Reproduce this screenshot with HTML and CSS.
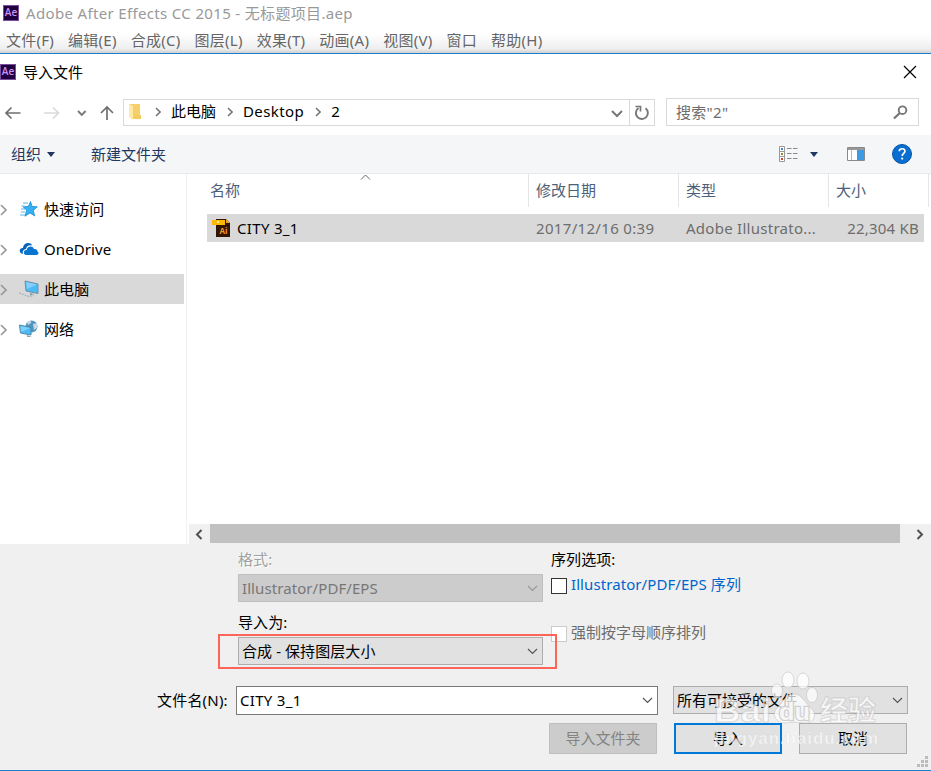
FILE: index.html
```
<!DOCTYPE html>
<html lang="zh-CN">
<head>
<meta charset="utf-8">
<title>导入文件</title>
<link rel="stylesheet" href="styles.css">
</head>
<body>
<div class="app">
  <header class="app-title"><span class="ae">Ae</span><span class="t-title">Adobe After Effects CC 2015 - 无标题项目.aep</span></header>
  <nav class="menu">
    <span>文件(F)</span><span>编辑(E)</span><span>合成(C)</span><span>图层(L)</span><span>效果(T)</span><span>动画(A)</span><span>视图(V)</span><span>窗口</span><span>帮助(H)</span>
  </nav>
  <section class="dialog">
    <div class="dlg-title"><span class="ae">Ae</span><span class="dlg-name">导入文件</span>
      <svg class="close" width="14" height="14" viewBox="0 0 14 14"><path d="M1 1l12 12M13 1L1 13" stroke="#000" stroke-width="1.2" fill="none"/></svg>
    </div>
    <div class="nav">
      <svg class="arrows" width="123" height="26" viewBox="0 0 123 26" fill="none" stroke-width="1.7">
        <path d="M6 14h14.500M11.500 8.500L6 14l5.500 5.500" stroke="#6f6f6f"/>
        <path d="M44 14h14.500M53 8.500l5.500 5.500-5.500 5.500" stroke="#dadada"/>
        <path d="M78 12l3.800 3.800 3.800-3.800" stroke="#777" stroke-width="1.900"/>
        <path d="M107 21V8M101 14l6-6 6 6" stroke="#6f6f6f"/>
      </svg>
      <div class="address">
        <svg class="folder" width="14" height="18" viewBox="0 0 14 18"><path d="M1 1h11v13H1z" fill="#f5cf68"/><path d="M1 1l4 2v14l-4-3z" fill="#ffe9a6"/><path d="M10 12h3v4h-8l0-2z" fill="#f3cb60"/></svg>
        <svg class="sep s1" width="6" height="10" viewBox="0 0 6 10"><path d="M1 1l4 4-4 4"/></svg>
        <span class="crumb c1">此电脑</span>
        <svg class="sep s2" width="6" height="10" viewBox="0 0 6 10"><path d="M1 1l4 4-4 4"/></svg>
        <span class="crumb c2">Desktop</span>
        <svg class="sep s3" width="6" height="10" viewBox="0 0 6 10"><path d="M1 1l4 4-4 4"/></svg>
        <span class="crumb">2</span>
        <svg class="drop" width="12" height="8" viewBox="0 0 12 8"><path d="M1 1l5 5 5-5" fill="none" stroke="#777" stroke-width="2"/></svg>
        <span class="refresh"><svg width="16" height="16" viewBox="0 0 16 16"><path d="M11.500 3.200A6 6 0 1 1 4.500 3" fill="none" stroke="#777" stroke-width="1.900"/><path d="M1.500 1.500h5v5" fill="none" stroke="#777" stroke-width="1.700"/></svg></span>
      </div>
      <div class="search"><span>搜索"2"</span><svg width="15" height="15" viewBox="0 0 15 15" fill="none" stroke="#777"><circle cx="9.500" cy="5.200" r="3.800" stroke-width="1.900"/><path d="M6.800 8L1 13.500" stroke-width="2.400"/></svg></div>
    </div>
    <div class="toolbar">
      <span class="organize">组织</span><i class="tri"></i><span class="newfolder">新建文件夹</span>
      <svg class="view" width="19" height="16" viewBox="0 0 19 16"><path d="M.5 .5h5v15h-5zM.5 5.500h5M.5 10.500h5" fill="#fff" stroke="#999"/><path d="M2 2h2v2H2z" fill="#4286c5"/><path d="M2 7h2v2H2z" fill="#8f8a30"/><path d="M2 12h2v2H2z" fill="#d34a20"/><path d="M8 2.500h4.500M14 2.500h4.500M8 7.500h4.500M14 7.500h4.500M8 12.500h4.500M14 12.500h4.500" stroke="#8a8a8a"/></svg>
      <i class="tri tri-view"></i>
      <svg class="pane" width="18" height="14" viewBox="0 0 18 14"><path d="M.5 .5h17v13H.5z" fill="#fff" stroke="#8a8a8a"/><path d="M1 1h16v2H1z" fill="#999"/><path d="M4.500 3v10" stroke="#bbb"/><path d="M10 3h7v10h-7z" fill="#3d9be6"/></svg>
      <svg class="help" width="20" height="20" viewBox="0 0 20 20"><circle cx="10" cy="10" r="9.500" fill="#0a6ed0" stroke="#0556a8"/><path d="M7.200 7.200c.3-3.400 6-3.200 5.700.1-.2 2-2.700 2.200-2.700 4.700" fill="none" stroke="#fff" stroke-width="1.700"/><circle cx="10.200" cy="14.600" r="1.100" fill="#fff"/></svg>
    </div>
    <div class="body">
      <aside class="side">
        <div class="item"><svg class="chev" width="8" height="12" viewBox="0 0 8 12"><path d="M1 1l5 5-5 5"/></svg>
          <svg class="ico" width="20" height="18" viewBox="0 0 20 18"><path d="M11.500 1.500l1.600 5 5.200.3-4 3.600 1.300 5.500-4.600-3-5 3.300 1.700-6L4.200 7l5.300-.8z" fill="#35b0f2" stroke="#168bd2" stroke-width=".8"/><path d="M4 3h5M2.500 6h3M2 9h4M2 12h4M1 15h5" stroke="#54b4ea"/></svg><span>快速访问</span></div>
        <div class="item"><svg class="chev" width="8" height="12" viewBox="0 0 8 12"><path d="M1 1l5 5-5 5"/></svg>
          <svg class="ico" width="20" height="18" viewBox="0 0 20 18"><path d="M4 14C-.5 13-.3 8 4 8c.2-5 7-7 9.500-2.500-4-1-6 1-6.500 3.500-3 .5-3.800 3-3 5z" fill="#0864bd"/><path d="M7 15c-3-.5-3-5 .6-5 .4-4 6-5 7.400-1 3-.2 3.500 2 3.500 2.500 1.800 1 1 3.500-1 3.500z" fill="#0875d1"/></svg><span>OneDrive</span></div>
        <div class="item selected"><svg class="chev" width="8" height="12" viewBox="0 0 8 12"><path d="M1 1l5 5-5 5"/></svg>
          <svg class="ico" width="20" height="18" viewBox="0 0 20 18"><path d="M6 1l13 3v9.500L7 11z" fill="#4db9f5" stroke="#6f8fa6"/><path d="M7 2l11 2.500L8 9z" fill="#83d1fa"/><path d="M11 13l4 1-4 1.500z" fill="#829eaf"/><path d="M0 13l10 3.500 5-1" fill="none" stroke="#a9b9c4" stroke-width="1.500" stroke-dasharray="2 1"/></svg><span>此电脑</span></div>
        <div class="item"><svg class="chev" width="8" height="12" viewBox="0 0 8 12"><path d="M1 1l5 5-5 5"/></svg>
          <svg class="ico" width="20" height="18" viewBox="0 0 20 18"><circle cx="12.500" cy="6.500" r="6" fill="#5296bd"/><path d="M8 2c3-2 5-1 4 1l-3 2zM14 4l4-1v5l-3 2z" fill="#c5dce8"/><path d="M.5 5L12 7.500V15L1.500 13z" fill="#4abbf6" stroke="#5186aa"/><path d="M1.500 6l9.500 2-9 4z" fill="#7dd2fb"/><path d="M8 15v2l5 0z" fill="#8ba4b2"/></svg><span>网络</span></div>
      </aside>
      <main class="files">
        <div class="head"><span class="h-name">名称<svg class="sort" width="11" height="6" viewBox="0 0 11 6"><path d="M1 5.500l4.500-4.500L10 5.500" fill="none" stroke="#666"/></svg></span><span>修改日期</span><span>类型</span><span>大小</span></div>
        <div class="file">
          <svg class="ai" width="20" height="20" viewBox="0 0 20 20"><path d="M5 1h10l4 4v14H5z" fill="#321503"/><path d="M15 1v4h4z" fill="#e9a52c"/><path d="M1 2h13v5H1z" fill="#fdb900"/><path d="M6 3h2v2H6z" fill="#fff0a0"/><text x="8.500" y="16" class="ai-text">Ai</text></svg>
          <span class="f-name">CITY 3_1</span><span class="f-date">2017/12/16 0:39</span><span class="f-type">Adobe Illustrato...</span><span class="f-size">22,304 KB</span>
        </div>
        <div class="scroll"><svg width="8" height="11" viewBox="0 0 8 11"><path d="M6.500 1L2 5.500 6.500 10"/></svg><i class="thumb"></i><svg width="8" height="11" viewBox="0 0 8 11"><path d="M1.500 1L6 5.500 1.500 10"/></svg></div>
      </main>
    </div>
    <div class="options">
      <div class="col-left">
        <label class="dim">格式:</label>
        <div class="select disabled"><span>Illustrator/PDF/EPS</span><svg class="v" width="11" height="7" viewBox="0 0 11 7"><path d="M1 1l4.500 4.500L10 1"/></svg></div>
        <label class="as">导入为:</label>
        <div class="select"><span>合成 - 保持图层大小</span><svg class="v" width="11" height="7" viewBox="0 0 11 7"><path d="M1 1l4.500 4.500L10 1"/></svg></div>
        <div class="mark"></div>
      </div>
      <div class="col-right">
        <label>序列选项:</label>
        <div class="check"><i></i><span>Illustrator/PDF/EPS 序列</span></div>
        <div class="check off"><i></i><span>强制按字母顺序排列</span></div>
      </div>
    </div>
    <div class="name-row"><label>文件名(N):</label>
      <div class="select input"><span>CITY 3_1</span><svg class="v" width="11" height="7" viewBox="0 0 11 7"><path d="M1 1l4.500 4.500L10 1"/></svg></div>
      <div class="select filter"><span>所有可接受的文件</span><svg class="v" width="11" height="7" viewBox="0 0 11 7"><path d="M1 1l4.500 4.500L10 1"/></svg></div>
    </div>
    <div class="buttons"><span class="btn b-off">导入文件夹</span><span class="btn primary">导入</span><span class="btn">取消</span></div>
    <svg class="watermark" width="176" height="90" viewBox="0 0 176 90">
      <g class="wm"><ellipse cx="73" cy="16" rx="6" ry="8"/><ellipse cx="88" cy="17" rx="6" ry="8"/><ellipse cx="62" cy="27" rx="5.500" ry="7"/><ellipse cx="97" cy="31" rx="5.500" ry="7.500"/>
      <path d="M79 30c8 0 11 9 17 14 6 5 4 15-5 15-8-1-14-1-21 0-9 0-14-9-8-15 6-5 8-14 17-14z"/>
      <text x="-1" y="58" class="wm-bai" textLength="57" lengthAdjust="spacingAndGlyphs">Bai</text>
      <text x="105" y="57" class="wm-cn">经验</text></g>
      <text x="64" y="56" class="wm-du" textLength="31" lengthAdjust="spacingAndGlyphs">du</text>
      <text x="-1" y="80" class="wm-url" textLength="164">jingyan.baidu.com</text>
    </svg>
    <svg class="grip" width="12" height="12" viewBox="0 0 12 12"><path d="M8 0h3v3H8zM4 4h3v3H4zM8 4h3v3H8zM0 8h3v3H0zM4 8h3v3H4zM8 8h3v3H8z" fill="#bcbcbc"/></svg>
  </section>
</div>
</body>
</html>
```
FILE: styles.css
```
* { box-sizing: border-box; }
body { margin: 0; background: #fff; color: #000; font: 400 15px/20px "Noto Sans", "Noto Sans CJK SC", sans-serif; }
span, label { white-space: nowrap; }
svg { flex: none; display: block; }
.app { width: 931px; height: 771px; overflow: hidden; }
.app-title { height: 26px; display: flex; align-items: center; padding-left: 3px; color: #999; }
.t-title { margin-left: 7px; letter-spacing: .34px; }
.ae { width: 16px; height: 16px; background: #210042; border: 1px solid #7b4e9d; color: #c995f3; font: 600 10px/13px "Open Sans", sans-serif; text-align: center; }
.menu { height: 27px; display: flex; align-items: center; gap: 14px; padding-left: 6px; color: #666; letter-spacing: .26px; background: linear-gradient(#fff 30%, #eee 85%, #d0d0d0); }
.dialog { height: 718px; border-top: 1px solid #1e7fcc; border-bottom: 1px solid #1e7fcc; background: #f0f0f0; position: relative; }
.dlg-title { height: 36px; display: flex; align-items: center; background: #fff; padding-right: 14px; }
.dlg-name { margin-left: 7px; }
.close { margin-left: auto; }
.nav { height: 45px; background: #fff; display: flex; align-items: flex-start; padding-top: 8px; }
.arrows { margin-top: 1px; }
.address { width: 532px; height: 27px; margin-top: 1px; border: 1px solid #d9d9d9; display: flex; align-items: center; padding: 0 0 2px 4px; }
.sep path { fill: none; stroke: #777; stroke-width: 1.6; }
.s1 { margin-left: 13px; }
.c1 { margin-left: 10px; }
.s2 { margin-left: 11px; }
.c2 { margin-left: 10px; letter-spacing: .4px; }
.s3 { margin-left: 11px; }
.s3 + .crumb { margin-left: 10px; }
.crumb { margin-top: -1px; }
.drop { margin-left: auto; margin-right: 6px; margin-top: 4px; }
.refresh { width: 25px; height: 25px; margin-bottom: -2px; border-left: 1px solid #d9d9d9; display: flex; align-items: center; justify-content: center; }
.search { width: 253px; height: 28px; margin-left: 11px; border: 1px solid #d9d9d9; color: #6d6d6d; letter-spacing: .3px; display: flex; align-items: center; justify-content: space-between; padding: 0 10px 0 9px; }
.toolbar { height: 39px; background: #f4f6f8; border-bottom: 1px solid #e8eaec; color: #1e3760; display: flex; align-items: center; padding-left: 11px; }
.tri { border: 4px solid transparent; border-top: 5px solid #1e3760; border-bottom: 0; margin-left: 6px; }
.newfolder { margin-left: 36px; }
.view { margin-left: auto; }
.tri-view { margin-left: 12px; }
.pane { margin-left: 29px; }
.help { margin-left: 27px; margin-right: 19px; }
.body { height: 370px; display: flex; background: #fff; }
.side { width: 187px; border-right: 1px solid #f0f0f0; padding-top: 20px; display: flex; flex-direction: column; gap: 10px; }
.item { height: 30px; width: 184px; display: flex; align-items: center; letter-spacing: .1px; }
.item.selected { background: #d9d9d9; }
.chev { margin-top: 2px; }
.chev path { fill: none; stroke: #999; stroke-width: 1.7; }
.ico { margin: 0 5px 0 11px; }
.files { flex: 1; min-width: 0; display: flex; flex-direction: column; padding-left: 2px; }
.head { height: 33px; display: grid; grid-template-columns: 340px 150px 150px 100px; color: #4c607a; }
.head > span { border-right: 1px solid #e5e5e5; padding: 6px 0 0 7px; }
.head .h-name { padding-left: 21px; position: relative; }
.sort { position: absolute; left: 171px; top: 0; }
.file { height: 28px; width: 717px; margin: 7px 0 0 18px; padding-left: 4px; background: #d9d9d9; color: #6d6d6d; letter-spacing: .33px; display: flex; align-items: center; }
.ai-text { font: 700 8px "Open Sans", sans-serif; letter-spacing: 0; fill: #f49a2b; }
.f-name { margin-left: 6px; width: 299px; color: #000; }
.f-date { width: 150px; }
.f-type { width: 136px; letter-spacing: .27px; }
.f-size { flex: 1; text-align: right; padding-right: 5px; letter-spacing: .22px; }
.scroll { margin-top: auto; height: 20px; background: #f0f0f0; display: flex; align-items: center; padding: 0 6px; }
.scroll path { fill: none; stroke: #505050; stroke-width: 2; }
.thumb { width: 690px; height: 19px; margin: 0 16px 1px 7px; align-self: flex-start; background: #c1c1c1; }
.options { height: 142px; display: flex; padding: 5px 0 0 238px; letter-spacing: .08px; }
.col-left { width: 305px; position: relative; }
.col-left label, .col-right label { display: block; }
.dim { color: #a0a0a0; text-shadow: 1px 1px #fff; }
.select { height: 28px; background: #e1e1e1; border: 1px solid #adadad; display: flex; align-items: center; justify-content: space-between; padding: 0 4px 0 3px; }
.col-left .select { margin-top: 5px; }
.col-left .as { margin-top: 10px; }
.v path { fill: none; stroke: #555; stroke-width: 1.2; }
.disabled { background: #ccc; border-color: #bfbfbf; color: #777; }
.disabled .v path { stroke: #999; }
.mark { position: absolute; left: -20px; top: 85px; width: 339px; height: 35px; border: 2px solid #fe6458; z-index: 1; }
.col-right { margin-left: 8px; }
.check { height: 20px; margin-top: 5px; display: flex; color: #0066cc; }
.check i { width: 16px; height: 16px; margin: 4px 4px 0 0; border: 1px solid #333; background: #fff; }
.off { margin-top: 28px; color: #6d6d6d; letter-spacing: 0; }
.off i { border-color: #ccc; }
.name-row { display: flex; height: 29px; align-items: flex-start; }
.name-row label { width: 236px; padding: 4px 0 0 157px; letter-spacing: .2px; }
.input { width: 422px; height: 29px; background: #fff; border-color: #7a7a7a; padding-bottom: 1px; letter-spacing: .3px; }
.filter { width: 235px; margin-left: 15px; }
.buttons { display: flex; gap: 17px; padding: 8px 0 0 549px; }
.btn { width: 108px; height: 31px; border: 1px solid #adadad; background: #e1e1e1; display: flex; align-items: center; justify-content: center; padding-bottom: 1px; }
.b-off { background: #ccc; border-color: #bfbfbf; color: #838383; }
.primary { border: 2px solid #0078d7; }
.watermark { position: absolute; left: 715px; top: 610px; overflow: visible; }
.wm { fill: rgba(255,255,255,.72); stroke: rgba(185,185,185,.5); stroke-width: 1; }
.wm-bai { font: 700 34px "Liberation Sans", sans-serif; }
.wm-cn { font: 700 28px "Noto Sans CJK SC", sans-serif; }
.wm-du { font: 700 24px "Liberation Sans", sans-serif; fill: #f6f6f6; stroke: #cfcfcf; stroke-width: 2.5; paint-order: stroke; }
.wm-url { font: 700 17px "Liberation Sans", sans-serif; fill: rgba(255,255,255,.65); stroke: rgba(190,190,190,.3); stroke-width: .5; }
.grip { position: absolute; right: 2px; bottom: 2px; }
```
